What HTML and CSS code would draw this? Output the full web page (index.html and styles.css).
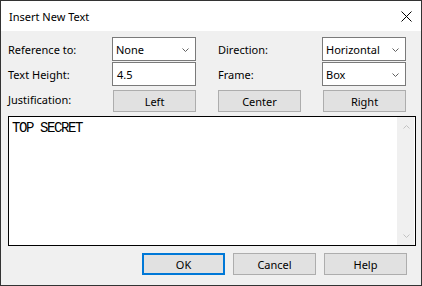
FILE: index.html
```html
<!DOCTYPE html>
<html>
<head>
<meta charset="utf-8">
<link rel="stylesheet" href="styles.css">
</head>
<body>
<div class="window">
  <div class="titlebar">
    <span class="title">Insert New Text</span>
    <svg class="close" width="11" height="11" viewBox="0 0 11 11"><path d="M0.5 0.5 L10.5 10.5 M10.5 0.5 L0.5 10.5" stroke="#000" stroke-width="1" fill="none"/></svg>
  </div>
  <div class="content">
    <div class="form">
      <label class="lbl">Reference to:</label>
      <div class="combo"><span>None</span><svg class="chev" width="7" height="4" viewBox="0 0 7 4"><path d="M0.5 0.5 L3.5 3.5 L6.5 0.5" stroke="#606060" fill="none"/></svg></div>
      <span></span>
      <label class="lbl">Direction:</label>
      <div class="combo"><span>Horizontal</span><svg class="chev" width="7" height="4" viewBox="0 0 7 4"><path d="M0.5 0.5 L3.5 3.5 L6.5 0.5" stroke="#606060" fill="none"/></svg></div>

      <label class="lbl">Text Height:</label>
      <div class="input">4.5</div>
      <span></span>
      <label class="lbl">Frame:</label>
      <div class="combo"><span>Box</span><svg class="chev" width="7" height="4" viewBox="0 0 7 4"><path d="M0.5 0.5 L3.5 3.5 L6.5 0.5" stroke="#606060" fill="none"/></svg></div>

      <label class="lbl btnrow">Justification:</label>
      <button class="btn btnrow">Left</button>
      <span class="btnrow"></span>
      <button class="btn btnrow">Center</button>
      <button class="btn btnrow">Right</button>
    </div>
    <div class="textarea">
      <div class="text">TOP SECRET</div>
      <div class="scrollbar">
        <svg width="7" height="4" viewBox="0 0 7 4"><path d="M0.5 3.5 L3.5 0.5 L6.5 3.5" stroke="#c2c2c2" fill="none"/></svg>
        <svg width="7" height="4" viewBox="0 0 7 4"><path d="M0.5 0.5 L3.5 3.5 L6.5 0.5" stroke="#c2c2c2" fill="none"/></svg>
      </div>
    </div>
    <div class="actions">
      <button class="btn default">OK</button>
      <button class="btn">Cancel</button>
      <button class="btn">Help</button>
    </div>
  </div>
</div>
</body>
</html>
```
FILE: styles.css
```css
* { box-sizing: border-box; }
html, body { margin: 0; padding: 0; background: #fff; }
body {
  font-family: "Noto Sans", "Liberation Sans", sans-serif;
  font-size: 11px;
  color: #000;
}
.window {
  width: 422px;
  height: 286px;
  border: 1px solid #333;
  display: flex;
  flex-direction: column;
  background: #f0f0f0;
}
.titlebar {
  height: 30px;
  background: #fff;
  display: flex;
  align-items: center;
  justify-content: space-between;
  padding: 0 9px 0 8px;
}
.title { font-size: 11px; margin-top: 1px; }
.close { margin-top: 0px; }
.content {
  flex: 1;
  padding: 6px 14px 0 6px;
  display: flex;
  flex-direction: column;
}
.form {
  display: grid;
  grid-template-columns: 105px 84px 21px 105px 84px;
  grid-template-rows: 24px 24px 22px;
  row-gap: 1px;
}
.lbl {
  display: flex;
  align-items: center;
  padding-left: 1px;
  white-space: nowrap;
}
.btnrow { margin-top: 3px; }
.combo, .input {
  background: #fff;
  border: 1px solid #7a7a7a;
  display: flex;
  align-items: center;
  justify-content: space-between;
  padding: 0 6px 0 3px;
  height: 24px;
}
.input { padding-left: 4px; }
.chev { flex: none; margin-top: 1px; }
.btn {
  font-family: inherit;
  font-size: 11px;
  color: #000;
  background: #e1e1e1;
  border: 1px solid #adadad;
  height: 22px;
  width: 83px;
  padding: 0;
  margin-left: 1px;
}
.textarea {
  margin-top: 7px;
  margin-left: 1px;
  width: 408px;
  height: 130px;
  border: 1px solid #000;
  background: #fff;
  display: flex;
  justify-content: space-between;
}
.text {
  font-family: "Liberation Mono", monospace;
  font-size: 14px;
  letter-spacing: -1.4px;
  padding: 3px 0 0 3px;
}
.scrollbar {
  width: 17px;
  margin-right: 1px;
  background: #f0f0f0;
  display: flex;
  flex-direction: column;
  align-items: center;
  justify-content: space-between;
  padding: 8px 0 7px 1px;
}
.actions {
  margin-top: 7px;
  display: flex;
  justify-content: flex-end;
  gap: 8px;
  padding-right: 0;
}
.actions .btn { margin-left: 0; }
.btn.default {
  border: 2px solid #0078d7;
}
```
